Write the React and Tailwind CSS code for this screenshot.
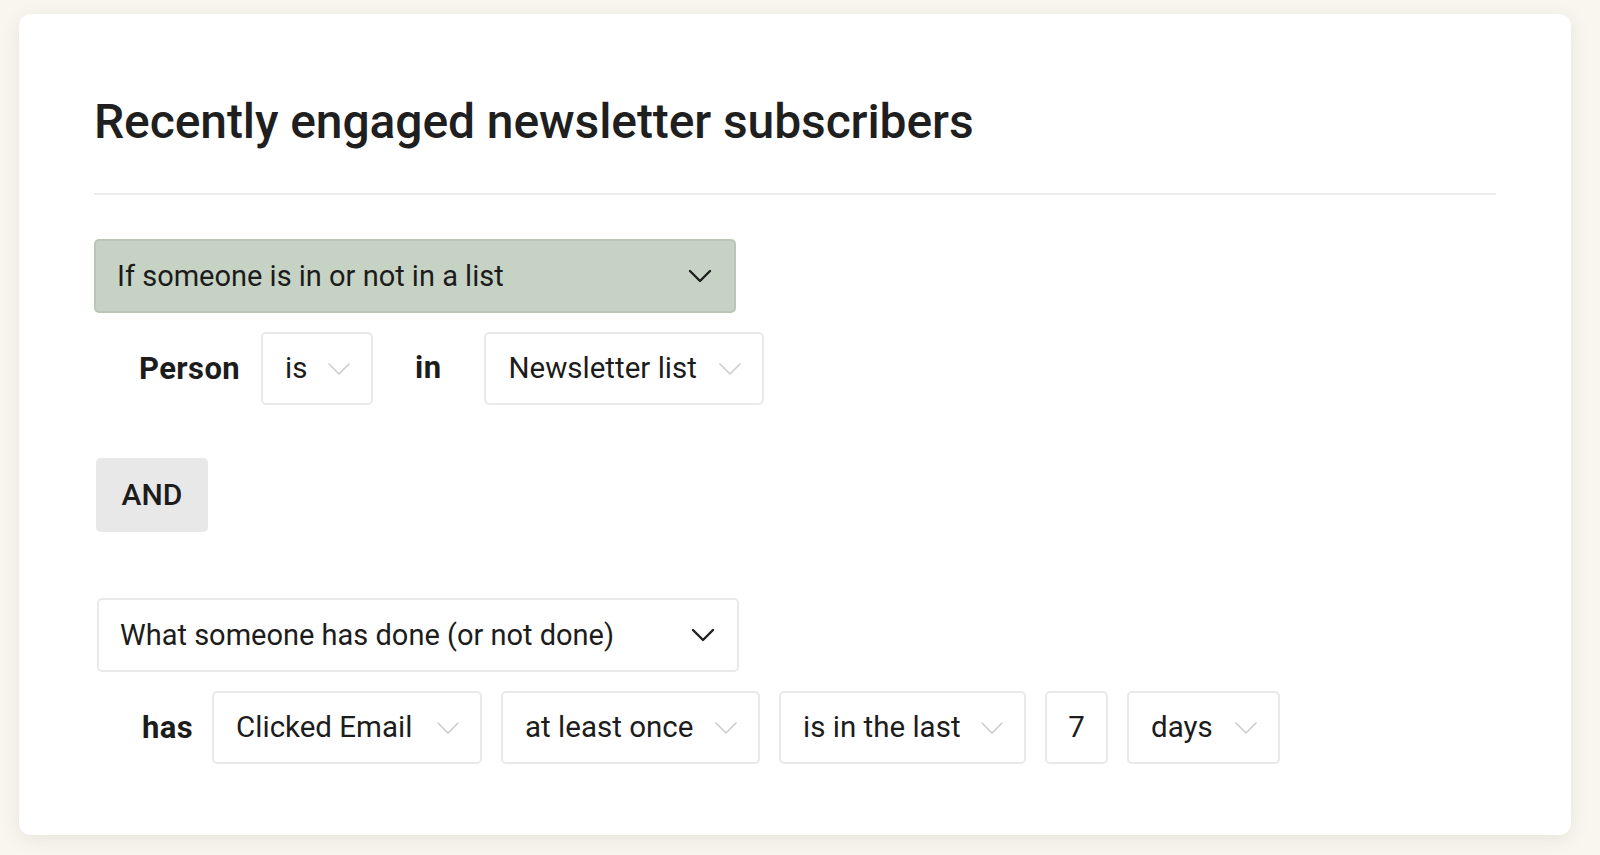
import React from 'react';

const font = { fontFamily: 'Roboto, "Liberation Sans", sans-serif' };

// Thin chevron, light by default, dark for the main selects
const Chevron = ({ dark }) => (
  <svg
    width="24"
    height="14"
    viewBox="0 0 24 14"
    fill="none"
    className="shrink-0"
  >
    <path
      d="M2 2 L12 12 L22 2"
      stroke={dark ? '#1f1f1f' : '#cdcdcd'}
      strokeWidth={dark ? 2.4 : 1.6}
      strokeLinecap="round"
      strokeLinejoin="round"
    />
  </svg>
);

const Select = ({ label, width, chevron = true }) => (
  <div
    className={`flex items-center h-[73px] rounded-[5px] border-2 border-[#e9e9e9] bg-white text-[29.5px] text-[#1c1c1c] ${
      chevron ? 'justify-between pl-[22px] pr-[20px]' : 'justify-center'
    } ${width}`}
  >
    <span className="leading-none whitespace-nowrap">{label}</span>
    {chevron && <Chevron />}
  </div>
);

const Label = ({ children }) => (
  <span className="text-[31px] font-bold tracking-[0.4px] text-[#1c1c1c] leading-none">{children}</span>
);

export default function App() {
  return (
    <div className="min-h-[855px] bg-[#f8f6ef] pt-[14px] pl-[19px] pr-[29px] pb-[20px]" style={font}>
      <div className="h-[821px] rounded-[12px] bg-white shadow-[0_4px_18px_rgba(120,110,80,0.12)] px-[75px] pt-[84px]">
        <h1 className="text-[48px] leading-none font-medium text-[#1f1f1f] tracking-[-0.1px]">
          Recently engaged newsletter subscribers
        </h1>
        <div className="mt-[47px] h-[2px] bg-[#ececec]" />

        <div className="mt-[44px] flex items-center justify-between w-[642px] h-[74px] rounded-[5px] border-2 border-[#b9c6b7] bg-[#c6d2c4] pl-[21px] pr-[22px] text-[29px] text-[#1c1c1c]">
          <span className="leading-none">If someone is in or not in a list</span>
          <Chevron dark />
        </div>

        <div className="mt-[19px] flex items-center pl-[45px]">
          <Label>Person</Label>
          <div className="ml-[21px]">
            <Select label="is" width="w-[112px]" />
          </div>
          <div className="ml-[42px] mr-[43px]">
            <Label>in</Label>
          </div>
          <Select label="Newsletter list" width="w-[280px]" />
        </div>

        <div className="mt-[53px] ml-[2px] flex items-center justify-center w-[112px] h-[74px] rounded-[5px] bg-[#e8e8e8] text-[30px] font-medium text-[#1c1c1c]">
          <span className="leading-none">AND</span>
        </div>

        <div className="mt-[66px] ml-[3px] flex items-center justify-between w-[642px] h-[74px] rounded-[5px] border-2 border-[#e9e9e9] bg-white pl-[21px] pr-[22px] text-[29px] text-[#1c1c1c]">
          <span className="leading-none">What someone has done (or not done)</span>
          <Chevron dark />
        </div>

        <div className="mt-[19px] flex items-center pl-[48px] gap-[19px]">
          <Label>has</Label>
          <Select label="Clicked Email" width="w-[270px]" />
          <Select label="at least once" width="w-[259px]" />
          <Select label="is in the last" width="w-[247px]" />
          <Select label="7" width="w-[63px]" chevron={false} />
          <Select label="days" width="w-[153px]" />
        </div>
      </div>
    </div>
  );
}
